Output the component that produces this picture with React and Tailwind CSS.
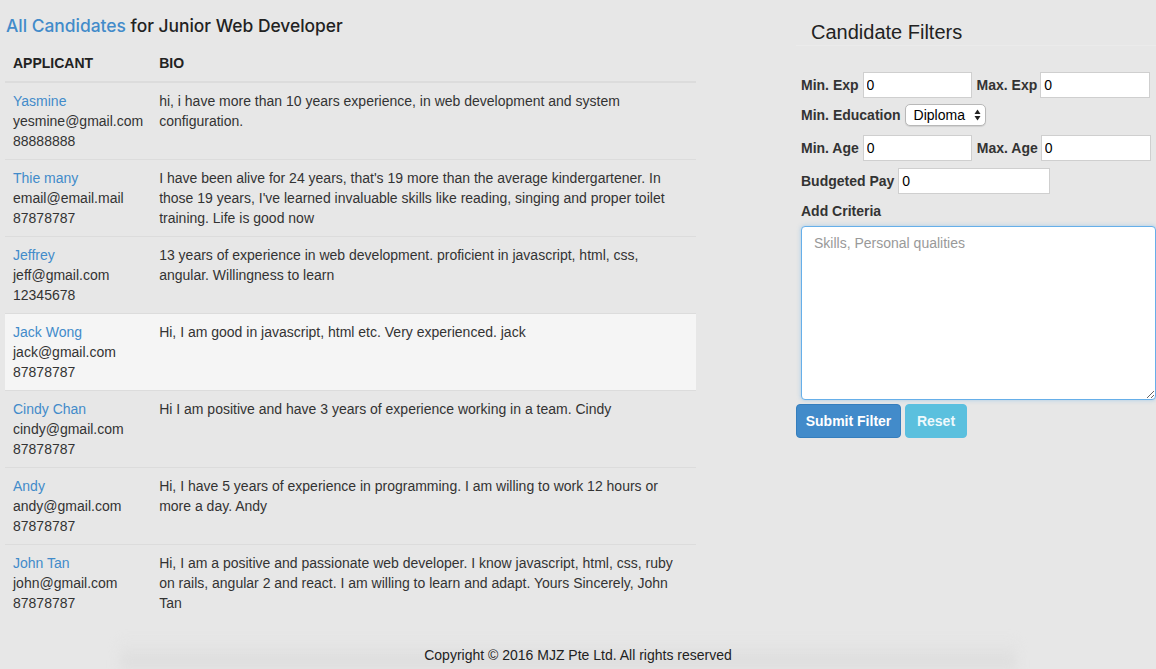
import React, { useState } from "react";

const candidates = [
  {
    name: "Yasmine",
    email: "yesmine@gmail.com",
    phone: "88888888",
    bio: "hi, i have more than 10 years experience, in web development and system configuration.",
  },
  {
    name: "Thie many",
    email: "email@email.mail",
    phone: "87878787",
    bio: "I have been alive for 24 years, that's 19 more than the average kindergartener. In those 19 years, I've learned invaluable skills like reading, singing and proper toilet training. Life is good now",
  },
  {
    name: "Jeffrey",
    email: "jeff@gmail.com",
    phone: "12345678",
    bio: "13 years of experience in web development. proficient in javascript, html, css, angular. Willingness to learn",
  },
  {
    name: "Jack Wong",
    email: "jack@gmail.com",
    phone: "87878787",
    bio: "Hi, I am good in javascript, html etc. Very experienced. jack",
  },
  {
    name: "Cindy Chan",
    email: "cindy@gmail.com",
    phone: "87878787",
    bio: "Hi I am positive and have 3 years of experience working in a team. Cindy",
  },
  {
    name: "Andy",
    email: "andy@gmail.com",
    phone: "87878787",
    bio: "Hi, I have 5 years of experience in programming. I am willing to work 12 hours or more a day. Andy",
  },
  {
    name: "John Tan",
    email: "john@gmail.com",
    phone: "87878787",
    bio: "Hi, I am a positive and passionate web developer. I know javascript, html, css, ruby on rails, angular 2 and react. I am willing to learn and adapt. Yours Sincerely, John Tan",
  },
];

const inputCls =
  "h-[26px] border border-[#cfcfcf] bg-white px-[3px] text-[14px] font-normal text-black outline-none";

const App = () => {
  const [hover, setHover] = useState(3);
  const [filters, setFilters] = useState({
    minExp: "0",
    maxExp: "0",
    edu: "Diploma",
    minAge: "0",
    maxAge: "0",
    pay: "0",
    criteria: "",
  });

  const change = (key) => (e) => setFilters({ ...filters, [key]: e.target.value });

  return (
    <div
      className="min-h-[669px] bg-[#e7e7e7] text-[14px] leading-[20px] text-[#333] flex flex-col"
      style={{ fontFamily: '"Liberation Sans", Arial, sans-serif' }}
    >
      <div className="flex flex-1">
        {/* candidates list */}
        <div className="w-[691px] ml-[5px]">
          <h3
            className="text-[17.4px] leading-[20px] mt-[16px] mb-[9px] ml-[1px] font-medium text-[#222]"
            style={{ fontFamily: "Inter, sans-serif" }}
          >
            <a className="text-[#428bca]">All Candidates</a> for Junior Web Developer
          </h3>
          <table className="w-full border-collapse">
            <thead>
              <tr className="border-b-2 border-[#dcdcdc]">
                <th className="w-[146px] text-left p-[8px] font-bold text-[#222]">APPLICANT</th>
                <th className="text-left p-[8px] font-bold text-[#222]">BIO</th>
              </tr>
            </thead>
            <tbody>
              {candidates.map((c, i) => (
                <tr
                  key={i}
                  onMouseEnter={() => setHover(i)}
                  className={`${i < candidates.length - 1 ? "border-b border-[#dcdcdc]" : ""} ${hover == i ? "bg-[#f5f5f5]" : ""}`}
                >
                  <td className="p-[8px] align-top">
                    <a className="block text-[#428bca]">{c.name}</a>
                    <div>{c.email}</div>
                    <div>{c.phone}</div>
                  </td>
                  <td className="p-[8px] pr-[14px] align-top">{c.bio}</td>
                </tr>
              ))}
            </tbody>
          </table>
        </div>

        {/* filter panel */}
        <div className="ml-[100px] w-[360px]">
          <div className="border-b border-[#ebebeb] pl-[15px] pt-[20px] pb-[1px]">
            <h3 className="text-[20px] leading-[24px] font-normal text-[#222]">Candidate Filters</h3>
          </div>
          <div className="pl-[5px] pt-[26px] flex flex-col font-bold text-[#333]">
            <div className="flex items-center h-[26px]">
              <label className="mr-[4px]">Min. Exp</label>
              <input className={`${inputCls} w-[109px]`} value={filters.minExp} onChange={change("minExp")} />
              <label className="ml-[5px] mr-[3px]">Max. Exp</label>
              <input className={`${inputCls} w-[110px]`} value={filters.maxExp} onChange={change("maxExp")} />
            </div>
            <div className="flex items-center mt-[6px] h-[22px]">
              <label className="mr-[4px]">Min. Education</label>
              <div className="relative">
                <select
                  className="appearance-none h-[22px] w-[81px] rounded-[5px] border border-[#b8b8b8] bg-white pl-[8px] text-[14px] font-normal text-black leading-[20px] shadow-[0_1px_1px_rgba(0,0,0,0.1)]"
                  value={filters.edu}
                  onChange={change("edu")}
                >
                  <option>Diploma</option>
                  <option>Degree</option>
                  <option>Masters</option>
                </select>
                <svg className="absolute right-[5px] top-[5px] pointer-events-none" width="7" height="12" viewBox="0 0 7 12">
                  <path d="M3.5 0.5 L6.5 5 L0.5 5 Z" fill="#222" />
                  <path d="M3.5 11.5 L6.5 7 L0.5 7 Z" fill="#222" />
                </svg>
              </div>
            </div>
            <div className="flex items-center mt-[9px] h-[26px]">
              <label className="mr-[4px]">Min. Age</label>
              <input className={`${inputCls} w-[109px]`} value={filters.minAge} onChange={change("minAge")} />
              <label className="ml-[5px] mr-[3px]">Max. Age</label>
              <input className={`${inputCls} w-[110px]`} value={filters.maxAge} onChange={change("maxAge")} />
            </div>
            <div className="flex items-center mt-[7px] h-[26px]">
              <label className="mr-[4px]">Budgeted Pay</label>
              <input className={`${inputCls} w-[152px]`} value={filters.pay} onChange={change("pay")} />
            </div>
            <label className="mt-[7px] block">Add Criteria</label>
            <textarea
              className="mt-[5px] h-[174px] w-[355px] rounded-[4px] border border-[#66afe9] bg-white px-[12px] py-[6px] text-[14px] font-normal text-black placeholder:text-[#999] outline-none shadow-[0_0_4px_rgba(102,175,233,0.5)]"
              placeholder="Skills, Personal qualities"
              value={filters.criteria}
              onChange={change("criteria")}
            />
          </div>
          <div className="flex gap-[4px] mt-[4px]">
            <button className="h-[34px] w-[105px] rounded-[4px] border border-[#357ebd] bg-[#428bca] text-white font-bold text-[14px]">
              Submit Filter
            </button>
            <button
              disabled
              className="h-[34px] w-[62px] rounded-[4px] border border-[#5bbfe0] bg-[#5bc0de] text-[#eef9fc] font-bold text-[14px]"
            >
              Reset
            </button>
          </div>
        </div>
      </div>

      <footer className="relative h-[48px] flex items-end justify-center pb-[4px]">
        <div className="absolute left-[120px] right-[140px] bottom-0 h-[30px] bg-gradient-to-b from-transparent to-[#dcdcdc] blur-[6px]" />
        <p className="relative text-[14px] text-[#222]">Copyright © 2016 MJZ Pte Ltd. All rights reserved</p>
      </footer>
    </div>
  );
};

export default App;
